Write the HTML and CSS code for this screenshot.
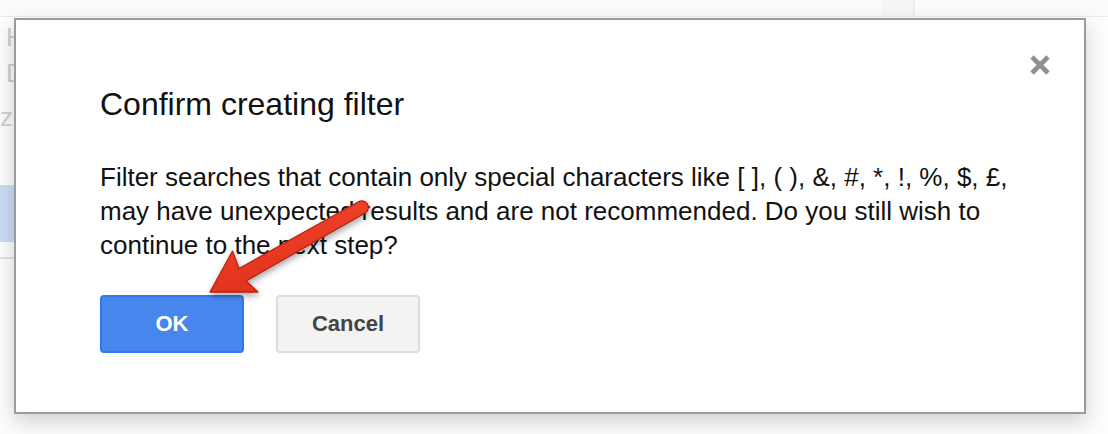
FILE: index.html
```html
<!DOCTYPE html>
<html>
<head>
<meta charset="utf-8">
<link rel="stylesheet" href="styles.css">
</head>
<body>
<div class="page">
  <div class="topbar"><div class="toppanel"></div></div>
  <div class="sidebar">
    <div class="side-item">Hi</div>
    <div class="side-item">Da</div>
    <div class="side-item small">ze</div>
    <div class="side-row"></div>
    <div class="side-line"></div>
  </div>
</div>

<div class="dialog">
  <button class="close" aria-label="Close">
    <svg width="22" height="22" viewBox="0 0 22 22"><path d="M3 3 L19 19 M19 3 L3 19" stroke="#8f8f8f" stroke-width="4.6" stroke-linecap="butt" fill="none"/></svg>
  </button>
  <h1 class="title">Confirm creating filter</h1>
  <p class="body">Filter searches that contain only special characters like [ ], ( ), &amp;, #, *, !, %, $, £, may have unexpected results and are not recommended. Do you still wish to continue to the next step?</p>
  <div class="buttons">
    <button class="btn btn-ok">OK</button>
    <button class="btn btn-cancel">Cancel</button>
  </div>
</div>

<svg class="arrow" width="1108" height="434" viewBox="0 0 1108 434">
  <defs>
    <linearGradient id="ag" x1="0" y1="0" x2="0.4" y2="1">
      <stop offset="0" stop-color="#f44a2e"/>
      <stop offset="1" stop-color="#e0301a"/>
    </linearGradient>
  </defs>
  <path d="M210 292 L258 292 L246 281 L365 213 A6.5 6.5 0 0 0 358.5 201.7 L239 268.5 L232.5 251 Z" fill="url(#ag)" stroke="#bb2210" stroke-width="1.3" stroke-linejoin="round"/>
</svg>
</body>
</html>
```

FILE: styles.css
```css
* { box-sizing: border-box; }
html, body {
  margin: 0;
  padding: 0;
  width: 1108px;
  height: 434px;
  overflow: hidden;
  background: #fdfdfd;
  font-family: Arial, "Liberation Sans", Helvetica, sans-serif;
}
.page {
  position: relative;
  width: 1108px;
  height: 434px;
}
.topbar {
  height: 17px;
  border-bottom: 1px solid #ececec;
  background: #fbfbfb;
  display: flex;
  justify-content: flex-end;
  padding-right: 193px;
}
.toppanel {
  width: 34px;
  height: 16px;
  background: #f6f6f6;
  border-right: 2px solid #ededed;
}
.sidebar {
  width: 20px;
  padding-top: 2px;
}
.side-item {
  font-size: 26px;
  color: #cfcfcf;
  height: 36px;
  line-height: 36px;
  padding-left: 6px;
}
.side-item.small {
  color: #d2d2d2;
  padding-left: 0;
  margin-top: 8px;
}
.side-row {
  margin-top: 50px;
  height: 57px;
  background: #cadcf5;
}
.side-line {
  margin-top: 15px;
  height: 2px;
  background: #e2e2e2;
}

.dialog {
  position: absolute;
  left: 14px;
  top: 18px;
  width: 1072px;
  height: 396px;
  background: #fff;
  border: 2px solid #9b9b9b;
  box-shadow: 0 8px 20px rgba(0,0,0,0.18);
  padding: 60px 84px 0 84px;
}
.close {
  position: absolute;
  right: 33px;
  top: 34px;
  width: 22px;
  height: 22px;
  padding: 0;
  border: 0;
  background: none;
  filter: blur(0.7px);
}
.close svg { display: block; }
.title {
  margin: 0;
  font-size: 32px;
  font-weight: normal;
  line-height: 48px;
  color: #111;
}
.body {
  margin: 32px 0 0 0;
  font-size: 26px;
  line-height: 34px;
  color: #111;
  width: 920px;
}
.buttons {
  margin-top: 33px;
  display: flex;
  gap: 32px;
}
.btn {
  width: 144px;
  height: 58px;
  border-radius: 4px;
  font-family: Arial, "Liberation Sans", sans-serif;
  font-size: 22px;
  font-weight: bold;
  padding: 0;
}
.btn-ok {
  background: #4787ed;
  border: 2px solid #3079ed;
  color: #fff;
}
.btn-cancel {
  background: #f3f3f3;
  border: 2px solid #dcdcdc;
  color: #444;
}
.arrow {
  position: absolute;
  left: 0;
  top: 0;
  pointer-events: none;
  filter: drop-shadow(1px 3px 3px rgba(0,0,0,0.35));
}
```
